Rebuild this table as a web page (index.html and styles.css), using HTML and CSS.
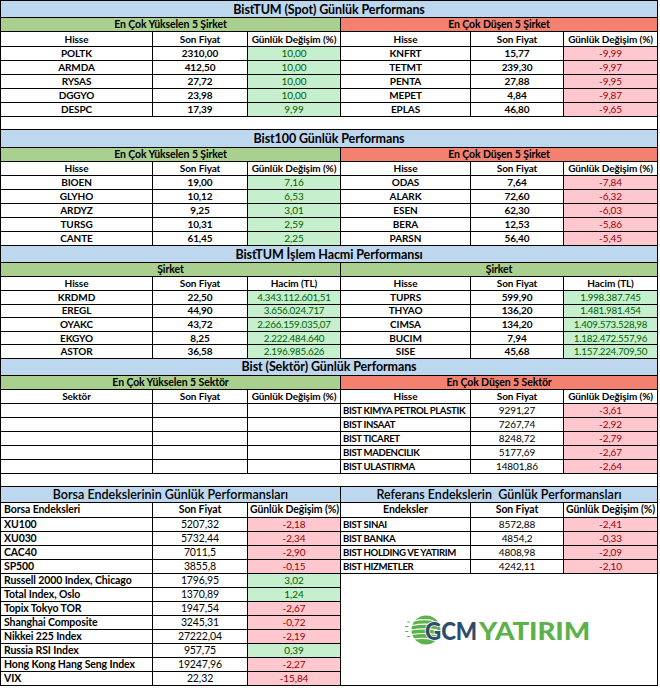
FILE: index.html
```html
<!DOCTYPE html>
<html lang="tr">
<head>
<meta charset="utf-8">
<title>Günlük Performans</title>
<link rel="stylesheet" href="styles.css">
</head>
<body>
<table class="sheet">
  <colgroup>
    <col class="c1"><col class="c2"><col class="c3"><col class="c4"><col class="c5"><col class="c6">
  </colgroup>
  <tbody>
    <!-- Section 1 -->
    <tr class="r-title"><td colspan="6" class="title">BistTUM (Spot) Günlük Performans</td></tr>
    <tr class="r-sub"><td colspan="3" class="sub-up">En Çok Yükselen 5 Şirket</td><td colspan="3" class="sub-down">En Çok Düşen 5 Şirket</td></tr>
    <tr class="r-head"><td>Hisse</td><td>Son Fiyat</td><td>Günlük Değişim (%)</td><td>Hisse</td><td>Son Fiyat</td><td>Günlük Değişim (%)</td></tr>
    <tr class="r-data"><td>POLTK</td><td>2310,00</td><td class="up">10,00</td><td>KNFRT</td><td>15,77</td><td class="down">-9,99</td></tr>
    <tr class="r-data"><td>ARMDA</td><td>412,50</td><td class="up">10,00</td><td>TETMT</td><td>239,30</td><td class="down">-9,97</td></tr>
    <tr class="r-data"><td>RYSAS</td><td>27,72</td><td class="up">10,00</td><td>PENTA</td><td>27,88</td><td class="down">-9,95</td></tr>
    <tr class="r-data"><td>DGGYO</td><td>23,98</td><td class="up">10,00</td><td>MEPET</td><td>4,84</td><td class="down">-9,87</td></tr>
    <tr class="r-data"><td>DESPC</td><td>17,39</td><td class="up">9,99</td><td>EPLAS</td><td>46,80</td><td class="down">-9,65</td></tr>
    <tr class="r-blank"><td colspan="6" class="blank"></td></tr>

    <!-- Section 2 -->
    <tr class="r-title2"><td colspan="6" class="title">Bist100 Günlük Performans</td></tr>
    <tr class="r-sub"><td colspan="3" class="sub-up">En Çok Yükselen 5 Şirket</td><td colspan="3" class="sub-down">En Çok Düşen 5 Şirket</td></tr>
    <tr class="r-head2"><td>Hisse</td><td>Son Fiyat</td><td>Günlük Değişim (%)</td><td>Hisse</td><td>Son Fiyat</td><td>Günlük Değişim (%)</td></tr>
    <tr class="r-data"><td>BIOEN</td><td>19,00</td><td class="up">7,16</td><td>ODAS</td><td>7,64</td><td class="down">-7,84</td></tr>
    <tr class="r-data"><td>GLYHO</td><td>10,12</td><td class="up">6,53</td><td>ALARK</td><td>72,60</td><td class="down">-6,32</td></tr>
    <tr class="r-data"><td>ARDYZ</td><td>9,25</td><td class="up">3,01</td><td>ESEN</td><td>62,30</td><td class="down">-6,03</td></tr>
    <tr class="r-data"><td>TURSG</td><td>10,31</td><td class="up">2,59</td><td>BERA</td><td>12,53</td><td class="down">-5,86</td></tr>
    <tr class="r-data"><td>CANTE</td><td>61,45</td><td class="up">2,25</td><td>PARSN</td><td>56,40</td><td class="down">-5,45</td></tr>

    <!-- Section 3 -->
    <tr class="r-title"><td colspan="6" class="title">BistTUM İşlem Hacmi Performansı</td></tr>
    <tr class="r-sub"><td colspan="3" class="sub-up">Şirket</td><td colspan="3" class="sub-up">Şirket</td></tr>
    <tr class="r-head2"><td>Hisse</td><td>Son Fiyat</td><td>Hacim (TL)</td><td>Hisse</td><td>Son Fiyat</td><td>Hacim (TL)</td></tr>
    <tr class="r-data3"><td>KRDMD</td><td>22,50</td><td class="up vol">4.343.112.601,51</td><td>TUPRS</td><td>599,90</td><td class="up vol">1.998.387.745</td></tr>
    <tr class="r-data3"><td>EREGL</td><td>44,90</td><td class="up vol">3.656.024.717</td><td>THYAO</td><td>136,20</td><td class="up vol">1.481.981.454</td></tr>
    <tr class="r-data3"><td>OYAKC</td><td>43,72</td><td class="up vol">2.266.159.035,07</td><td>CIMSA</td><td>134,20</td><td class="up vol">1.409.573.528,98</td></tr>
    <tr class="r-data3"><td>EKGYO</td><td>8,25</td><td class="up vol">2.222.484.640</td><td>BUCIM</td><td>7,94</td><td class="up vol">1.182.472.557,96</td></tr>
    <tr class="r-data3"><td>ASTOR</td><td>36,58</td><td class="up vol">2.196.985.626</td><td>SISE</td><td>45,68</td><td class="up vol">1.157.224.709,50</td></tr>

    <!-- Section 4 -->
    <tr class="r-title"><td colspan="6" class="title">Bist (Sektör) Günlük Performans</td></tr>
    <tr class="r-sub"><td colspan="3" class="sub-up">En Çok Yükselen 5 Sektör</td><td colspan="3" class="sub-down">En Çok Düşen 5 Sektör</td></tr>
    <tr class="r-head2"><td>Sektör</td><td>Son Fiyat</td><td>Günlük Değişim (%)</td><td>Hisse</td><td>Son Fiyat</td><td>Günlük Değişim (%)</td></tr>
    <tr class="r-data"><td></td><td></td><td></td><td class="name">BIST KIMYA PETROL PLASTIK</td><td class="plain">9291,27</td><td class="down">-3,61</td></tr>
    <tr class="r-data"><td></td><td></td><td></td><td class="name">BIST INSAAT</td><td class="plain">7267,74</td><td class="down">-2,92</td></tr>
    <tr class="r-data"><td></td><td></td><td></td><td class="name">BIST TICARET</td><td class="plain">8248,72</td><td class="down">-2,79</td></tr>
    <tr class="r-data"><td></td><td></td><td></td><td class="name">BIST MADENCILIK</td><td class="plain">5177,69</td><td class="down">-2,67</td></tr>
    <tr class="r-data"><td></td><td></td><td></td><td class="name">BIST ULASTIRMA</td><td class="plain">14801,86</td><td class="down">-2,64</td></tr>
    <tr class="r-blank"><td colspan="6" class="blank"></td></tr>

    <!-- Section 5 -->
    <tr class="r-title5"><td colspan="3" class="title title5">Borsa Endekslerinin Günlük Performansları</td><td colspan="3" class="title title5">Referans Endekslerin&nbsp; Günlük Performansları</td></tr>
    <tr class="r-head5"><td class="lname">Borsa Endeksleri</td><td>Son Fiyat</td><td>Günlük Değişim (%)</td><td>Endeksler</td><td>Son Fiyat</td><td>Günlük Değişim (%)</td></tr>
    <tr class="r-data5"><td class="lname">XU100</td><td class="plain5">5207,32</td><td class="down">-2,18</td><td class="name">BIST SINAI</td><td class="plain">8572,88</td><td class="down">-2,41</td></tr>
    <tr class="r-data5"><td class="lname">XU030</td><td class="plain5">5732,44</td><td class="down">-2,34</td><td class="name">BIST BANKA</td><td class="plain">4854,2</td><td class="down">-0,33</td></tr>
    <tr class="r-data5"><td class="lname">CAC40</td><td class="plain5">7011,5</td><td class="down">-2,90</td><td class="name">BIST HOLDING VE YATIRIM</td><td class="plain">4808,98</td><td class="down">-2,09</td></tr>
    <tr class="r-data5"><td class="lname">SP500</td><td class="plain5">3855,8</td><td class="down">-0,15</td><td class="name">BIST HIZMETLER</td><td class="plain">4242,11</td><td class="down">-2,10</td></tr>
    <tr class="r-data5"><td class="lname">Russell 2000 Index, Chicago</td><td class="plain5">1796,95</td><td class="up">3,02</td>
      <td colspan="3" rowspan="8" class="logo-cell">
        <svg class="logo" width="182" height="34" viewBox="0 0 182 34" xmlns="http://www.w3.org/2000/svg">
          <circle cx="15" cy="17" r="14.5" fill="#5db14a"/>
          <g fill="none" stroke="#ffffff" stroke-width="1.2" stroke-linecap="round">
            <path d="M3 8 Q12 5.5 22 7.5"/>
            <path d="M1.2 12.5 Q12 10 25 12"/>
            <path d="M0.6 17 Q12 14.8 26 16.8"/>
            <path d="M1.2 21.5 Q12 19.5 25 21.5"/>
            <path d="M3 26 Q12 24.5 22 26.5"/>
          </g>
          <g fill="#5db14a">
            <rect x="-4" y="8.5" width="3" height="1" rx="0.5"/>
            <rect x="-6" y="13" width="3.5" height="1" rx="0.5"/>
            <rect x="-6" y="18" width="3.5" height="1" rx="0.5"/>
            <rect x="-4" y="23" width="3" height="1" rx="0.5"/>
          </g>
          <text x="14" y="26.5" class="logo-gcm" textLength="52" lengthAdjust="spacingAndGlyphs">GCM</text>
          <text x="68" y="26.5" class="logo-yat" textLength="111" lengthAdjust="spacingAndGlyphs">YATIRIM</text>
        </svg>
      </td>
    </tr>
    <tr class="r-data5"><td class="lname">Total Index, Oslo</td><td class="plain5">1370,89</td><td class="up">1,24</td></tr>
    <tr class="r-data5"><td class="lname">Topix Tokyo TOR</td><td class="plain5">1947,54</td><td class="down">-2,67</td></tr>
    <tr class="r-data5"><td class="lname">Shanghai Composite</td><td class="plain5">3245,31</td><td class="down">-0,72</td></tr>
    <tr class="r-data5"><td class="lname">Nikkei 225 Index</td><td class="plain5">27222,04</td><td class="down">-2,19</td></tr>
    <tr class="r-data5"><td class="lname">Russia RSI Index</td><td class="plain5">957,75</td><td class="up">0,39</td></tr>
    <tr class="r-data5"><td class="lname">Hong Kong Hang Seng Index</td><td class="plain5">19247,96</td><td class="down">-2,27</td></tr>
    <tr class="r-data5"><td class="lname">VIX</td><td class="plain5">22,32</td><td class="down">-15,84</td></tr>
  </tbody>
</table>
</body>
</html>
```

FILE: styles.css
```css
html, body {
  margin: 0;
  padding: 0;
  background: #ffffff;
}

body {
  font-family: Lato, "Liberation Sans", sans-serif;
  color: #000000;
}

.sheet {
  border-collapse: collapse;
  table-layout: fixed;
  width: 657px;
}

.c1 { width: 152px; }
.c2 { width: 95px; }
.c3 { width: 93px; }
.c4 { width: 130px; }
.c5 { width: 93px; }
.c6 { width: 94px; }

.sheet td {
  border: 1px solid #000000;
  padding: 0 2px;
  font-size: 10px;
  font-weight: 700;
  line-height: 11px;
  text-align: center;
  vertical-align: middle;
  white-space: nowrap;
  overflow: hidden;
  letter-spacing: -0.1px;
}

.r-title td { height: 16px; }
.r-title2 td { height: 17px; }
.r-sub td { height: 13px; }
.r-head td { height: 14px; }
.r-head2 td { height: 13px; }
.r-data td { height: 13px; }
.r-data3 td { height: 12.6px; }
.r-blank td { height: 12px; }
.r-title5 td { height: 15px; }
.r-head5 td { height: 14px; }
.r-data5 td { height: 13px; }

.sheet td.title {
  background: #bdd7ee;
  font-size: 12.5px;
  font-weight: 700;
  letter-spacing: -0.1px;
}

.sheet td.title5 {
  font-size: 12.5px;
  font-weight: 600;
  letter-spacing: 0;
}

.sheet td.sub-up {
  background: #a9d08e;
  font-size: 10.5px;
}

.sheet td.sub-down {
  background: #f4806f;
  font-size: 10.5px;
}

.sheet td.up {
  background: #c6efce;
  color: #006100;
  font-weight: 400;
}

.sheet td.down {
  background: #ffc7ce;
  color: #9c0006;
  font-weight: 400;
}

.sheet td.vol {
  letter-spacing: -0.25px;
  font-size: 9.8px;
}

.sheet td.name {
  text-align: left;
  padding-left: 2px;
  font-size: 9.6px;
  letter-spacing: -0.35px;
}

.sheet td.plain {
  font-weight: 400;
}

.sheet td.plain5 {
  font-weight: 400;
  font-size: 10.5px;
}

.r-head5 td {
  font-size: 10.5px;
}

.sheet td.lname {
  text-align: left;
  padding-left: 3px;
  font-size: 10.5px;
}

.sheet td.blank {
  border-top: 1px solid #000000;
  border-bottom: 1px solid #000000;
}

.sheet td.logo-cell {
  background: #ffffff;
  text-align: center;
  vertical-align: middle;
  padding: 0 0 0 6px;
}

.logo {
  display: block;
  margin: 2px auto 0;
  overflow: visible;
}

.logo-gcm {
  font-family: Lato, "Liberation Sans", sans-serif;
  font-weight: 900;
  font-size: 24px;
  fill: #2e4d6b;
  stroke: #ffffff;
  stroke-width: 1.5px;
  paint-order: stroke;
}

.logo-yat {
  font-family: Lato, "Liberation Sans", sans-serif;
  font-weight: 900;
  font-size: 24px;
  fill: #5db14a;
}
```
